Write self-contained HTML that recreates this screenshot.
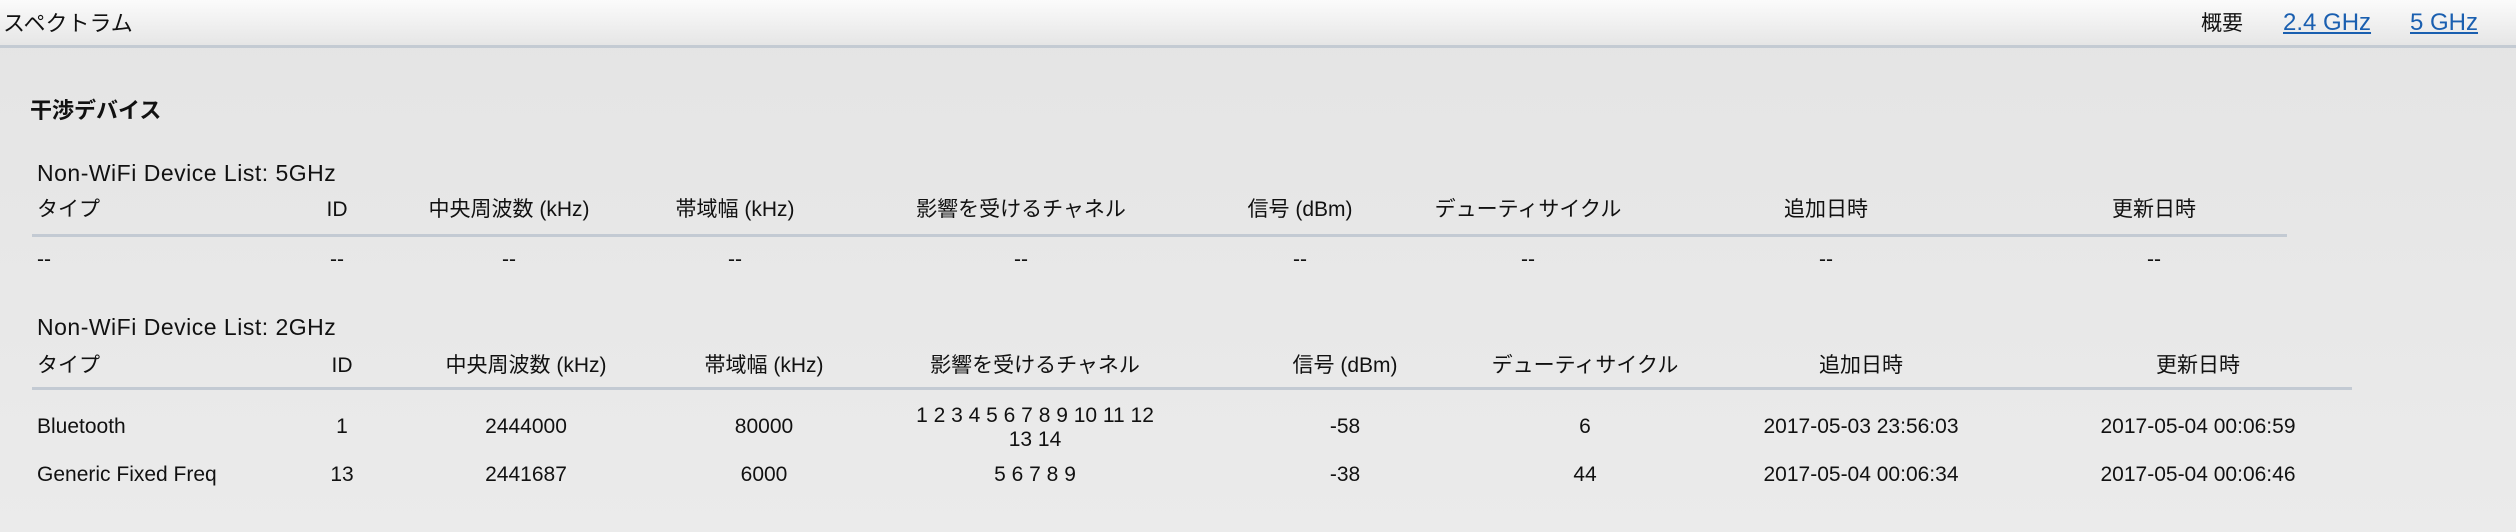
<!DOCTYPE html>
<html><head><meta charset="utf-8"><style>
html,body{margin:0;padding:0;}
body{width:2516px;height:532px;position:relative;overflow:hidden;background:linear-gradient(#e4e4e4,#ebebeb);font-family:"Liberation Sans","Noto Sans CJK JP",sans-serif;font-size:21px;color:#111;}
.hdr{position:absolute;left:0;top:0;width:2516px;height:45px;background:linear-gradient(#fbfbfb,#e6e6e6);border-bottom:3px solid #c4cbd3;}
.t{position:absolute;line-height:24px;white-space:nowrap;}
.c{position:absolute;line-height:24px;white-space:nowrap;transform:translateX(-50%);text-align:center;}
a{color:#1a5fb0;text-decoration:underline;}
.ln{position:absolute;height:3px;background:#c3cad3;}
.w{letter-spacing:0.5px;}
</style></head><body>
<div class="hdr"></div>
<div class="t" style="left:3px;top:12px;font-size:22px">スペクトラム</div>
<div class="t" style="left:2201px;top:12px">概要</div>
<div class="t" style="left:2283px;top:11px;font-size:24px"><a>2.4 GHz</a></div>
<div class="t" style="left:2410px;top:11px;font-size:24px"><a>5 GHz</a></div>

<div class="t" style="left:30px;top:99px;font-weight:bold;font-size:22px">干渉デバイス</div>

<div class="t w" style="left:37px;top:161px;font-size:23px">Non-WiFi Device List: 5GHz</div>
<div class="t" style="left:37px;top:198px">タイプ</div>
<div class="c" style="left:337px;top:198px">ID</div>
<div class="c" style="left:509px;top:198px">中央周波数 (kHz)</div>
<div class="c" style="left:735px;top:198px">帯域幅 (kHz)</div>
<div class="c" style="left:1021px;top:198px">影響を受けるチャネル</div>
<div class="c" style="left:1300px;top:198px">信号 (dBm)</div>
<div class="c" style="left:1528px;top:198px">デューティサイクル</div>
<div class="c" style="left:1826px;top:198px">追加日時</div>
<div class="c" style="left:2154px;top:198px">更新日時</div>
<div class="ln" style="left:32px;top:234px;width:2255px"></div>
<div class="t" style="left:37px;top:248px">--</div>
<div class="c" style="left:337px;top:248px">--</div>
<div class="c" style="left:509px;top:248px">--</div>
<div class="c" style="left:735px;top:248px">--</div>
<div class="c" style="left:1021px;top:248px">--</div>
<div class="c" style="left:1300px;top:248px">--</div>
<div class="c" style="left:1528px;top:248px">--</div>
<div class="c" style="left:1826px;top:248px">--</div>
<div class="c" style="left:2154px;top:248px">--</div>

<div class="t w" style="left:37px;top:315px;font-size:23px">Non-WiFi Device List: 2GHz</div>
<div class="t" style="left:37px;top:354px">タイプ</div>
<div class="c" style="left:342px;top:354px">ID</div>
<div class="c" style="left:526px;top:354px">中央周波数 (kHz)</div>
<div class="c" style="left:764px;top:354px">帯域幅 (kHz)</div>
<div class="c" style="left:1035px;top:354px">影響を受けるチャネル</div>
<div class="c" style="left:1345px;top:354px">信号 (dBm)</div>
<div class="c" style="left:1585px;top:354px">デューティサイクル</div>
<div class="c" style="left:1861px;top:354px">追加日時</div>
<div class="c" style="left:2198px;top:354px">更新日時</div>
<div class="ln" style="left:32px;top:387px;width:2320px"></div>

<div class="t" style="left:37px;top:415px">Bluetooth</div>
<div class="c" style="left:342px;top:415px">1</div>
<div class="c" style="left:526px;top:415px">2444000</div>
<div class="c" style="left:764px;top:415px">80000</div>
<div class="c" style="left:1035px;top:404px">1 2 3 4 5 6 7 8 9 10 11 12</div>
<div class="c" style="left:1035px;top:428px">13 14</div>
<div class="c" style="left:1345px;top:415px">-58</div>
<div class="c" style="left:1585px;top:415px">6</div>
<div class="c" style="left:1861px;top:415px">2017-05-03 23:56:03</div>
<div class="c" style="left:2198px;top:415px">2017-05-04 00:06:59</div>

<div class="t" style="left:37px;top:463px">Generic Fixed Freq</div>
<div class="c" style="left:342px;top:463px">13</div>
<div class="c" style="left:526px;top:463px">2441687</div>
<div class="c" style="left:764px;top:463px">6000</div>
<div class="c" style="left:1035px;top:463px">5 6 7 8 9</div>
<div class="c" style="left:1345px;top:463px">-38</div>
<div class="c" style="left:1585px;top:463px">44</div>
<div class="c" style="left:1861px;top:463px">2017-05-04 00:06:34</div>
<div class="c" style="left:2198px;top:463px">2017-05-04 00:06:46</div>
</body></html>
